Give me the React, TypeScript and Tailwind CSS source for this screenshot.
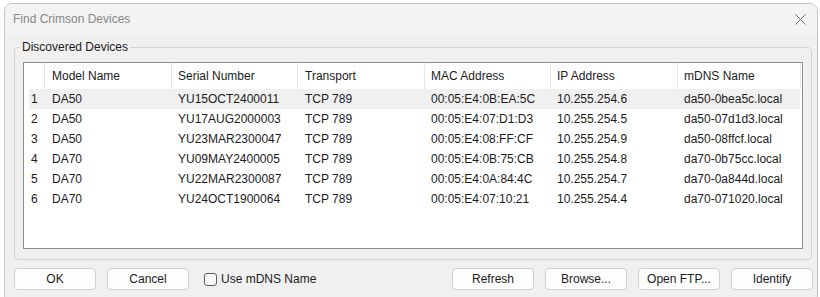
import React from 'react';

type Device = {
	model: string;
	serial: string;
	transport: string;
	mac: string;
	ip: string;
	mdns: string;
};

const devices: Device[] = [
	{ model: 'DA50', serial: 'YU15OCT2400011', transport: 'TCP 789', mac: '00:05:E4:0B:EA:5C', ip: '10.255.254.6', mdns: 'da50-0bea5c.local' },
	{ model: 'DA50', serial: 'YU17AUG2000003', transport: 'TCP 789', mac: '00:05:E4:07:D1:D3', ip: '10.255.254.5', mdns: 'da50-07d1d3.local' },
	{ model: 'DA50', serial: 'YU23MAR2300047', transport: 'TCP 789', mac: '00:05:E4:08:FF:CF', ip: '10.255.254.9', mdns: 'da50-08ffcf.local' },
	{ model: 'DA70', serial: 'YU09MAY2400005', transport: 'TCP 789', mac: '00:05:E4:0B:75:CB', ip: '10.255.254.8', mdns: 'da70-0b75cc.local' },
	{ model: 'DA70', serial: 'YU22MAR2300087', transport: 'TCP 789', mac: '00:05:E4:0A:84:4C', ip: '10.255.254.7', mdns: 'da70-0a844d.local' },
	{ model: 'DA70', serial: 'YU24OCT1900064', transport: 'TCP 789', mac: '00:05:E4:07:10:21', ip: '10.255.254.4', mdns: 'da70-071020.local' },
];

function Button({ label }: { label: string }) {
	return (
		<button className="w-[82px] h-[22px] rounded-[4px] border border-[#d0d0d0] bg-[#fdfdfd] text-[12px] leading-[20px] text-[#1b1b1b]">
			{label}
		</button>
	);
}

export default function App() {
	return (
		<div className="w-[820px] h-[297px] overflow-hidden bg-white font-['Liberation_Sans',Arial,sans-serif] text-[12px] text-[#1b1b1b]">
			<div className="ml-[4px] mt-[3px] w-[814px] h-[300px] rounded-[8px] border border-[#c4c4c4] bg-[#f0f0f0] overflow-hidden">
				{/* title bar */}
				<div className="h-[30px] bg-[#f3f3f3] flex items-center justify-between pl-[8px] pr-[11px]">
					<span className="text-[#878787] leading-[16px]">Find Crimson Devices</span>
					<svg width="11" height="11" viewBox="0 0 11 11">
						<path d="M0.5 0.5 L10.5 10.5 M10.5 0.5 L0.5 10.5" stroke="#6e6e6e" strokeWidth="1" fill="none" />
					</svg>
				</div>

				<fieldset className="ml-[9px] mt-[5px] w-[798px] rounded-[4px] border border-[#d3d3d3] px-[8px] pt-[7px] pb-[10px]">
					<legend className="-ml-[3px] px-[2px] leading-[16px] text-[#1b1b1b]">Discovered Devices</legend>

					<div className="h-[187px] w-[780px] border border-[#8d8d8d] bg-white">
						{/* header */}
						<div className="flex h-[26px] items-center">
							<div className="w-[20px] h-full" />
							<div className="w-[127px] h-full border-l border-[#e5e5e5] pl-[7px] flex items-center">Model Name</div>
							<div className="w-[126px] h-full border-l border-[#e5e5e5] pl-[6px] flex items-center">Serial Number</div>
							<div className="w-[127px] h-full border-l border-[#e5e5e5] pl-[7px] flex items-center">Transport</div>
							<div className="w-[126px] h-full border-l border-[#e5e5e5] pl-[6px] flex items-center">MAC Address</div>
							<div className="w-[127px] h-full border-l border-[#e5e5e5] pl-[6px] flex items-center">IP Address</div>
							<div className="w-[123px] h-full border-l border-[#e5e5e5] pl-[6px] flex items-center">mDNS Name</div>
							<div className="w-[1px] h-full bg-[#e5e5e5]" />
						</div>

						{/* rows */}
						{devices.map((d, index) => (
							<div
								key={index}
								className={`ml-[5px] w-[771px] h-[20px] flex items-center ${index === 0 ? 'bg-[#f0f0f0]' : ''}`}
							>
								<div className="w-[15px] pl-[2px]">{index + 1}</div>
								<div className="w-[127px] pl-[8px]">{d.model}</div>
								<div className="w-[126px] pl-[7px]">{d.serial}</div>
								<div className="w-[127px] pl-[8px]">{d.transport}</div>
								<div className="w-[126px] pl-[7px]">{d.mac}</div>
								<div className="w-[127px] pl-[7px]">{d.ip}</div>
								<div className="w-[123px] pl-[7px]">{d.mdns}</div>
							</div>
						))}
					</div>
				</fieldset>

				{/* buttons */}
				<div className="ml-[9px] mt-[8px] w-[799px] flex items-center">
					<div className="flex items-center gap-[11px]">
						<Button label="OK" />
						<Button label="Cancel" />
					</div>
					<label className="ml-[15px] flex items-center gap-[4px]">
						<span className="w-[13px] h-[13px] rounded-[3px] border border-[#5c5c5c] bg-[#f7f7f7]" />
						<span>Use mDNS Name</span>
					</label>
					<div className="ml-auto flex items-center gap-[11px]">
						<Button label="Refresh" />
						<Button label="Browse..." />
						<Button label="Open FTP..." />
						<Button label="Identify" />
					</div>
				</div>
			</div>
		</div>
	);
}
